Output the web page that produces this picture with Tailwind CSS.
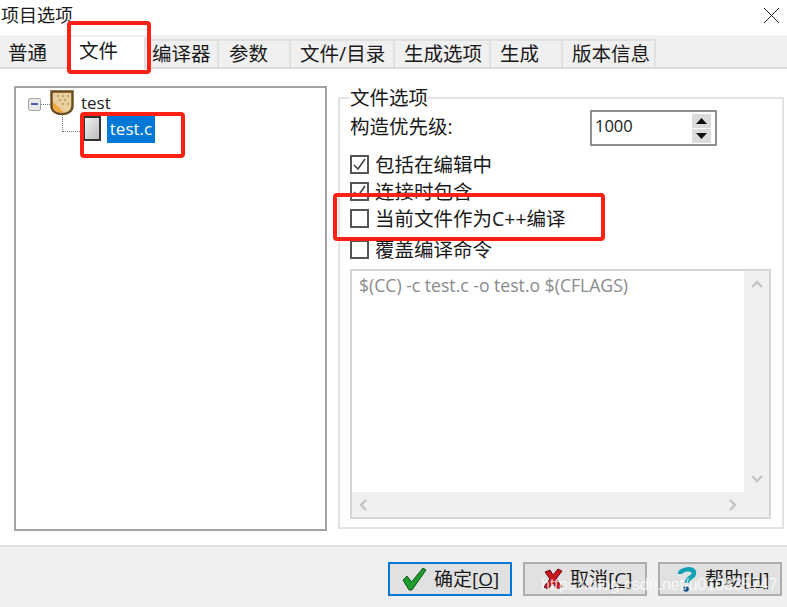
<!DOCTYPE html>
<html lang="zh-CN">
  <head>
    <meta charset="UTF-8" />
    <title>项目选项</title>
    <script src="https://cdn.jsdelivr.net/npm/@tailwindcss/browser@4"></script>
  </head>
  <body class="bg-white">
    <div class="relative flex flex-col w-[787px] h-[607px] overflow-hidden bg-white text-[19.5px] leading-none text-[#1a1a1a] font-['Open_Sans','Noto_Sans_CJK_SC',sans-serif]">
      <!-- title bar -->
      <div class="flex items-center justify-between h-[35px] pl-px pr-[8px] pb-[5px] text-[18px]">
        <span>项目选项</span>
        <svg class="w-[15px] h-[15px]" viewBox="0 0 15 15"><path d="M0 0L15 15M15 0L0 15" stroke="#222" fill="none" /></svg>
      </div>

      <!-- tabs -->
      <div class="flex items-end h-[34px] bg-[#f0f0f0] border-b-2 border-[#dcdcdc]">
        <div class="flex items-center w-[70px] h-[28px] pl-[8px] border-r-2 border-[#e0e0e0]">普通</div>
        <div class="flex items-center w-[76px] h-[32px] pl-[9px] pb-[4px] -mb-[2px] bg-white border-r-2 border-[#e0e0e0]">文件</div>
        <div class="flex items-center w-[73px] h-[28px] pl-[6px] border-t-2 border-r-2 border-[#e0e0e0]">编译器</div>
        <div class="flex items-center w-[72px] h-[28px] pl-[10px] border-t-2 border-r-2 border-[#e0e0e0]">参数</div>
        <div class="flex items-center w-[104px] h-[28px] pl-[9px] border-t-2 border-r-2 border-[#e0e0e0]">文件/目录</div>
        <div class="flex items-center w-[96px] h-[28px] pl-[9px] border-t-2 border-r-2 border-[#e0e0e0]">生成选项</div>
        <div class="flex items-center w-[72px] h-[28px] pl-[9px] border-t-2 border-r-2 border-[#e0e0e0]">生成</div>
        <div class="flex items-center w-[93px] h-[28px] pl-[9px] border-t-2 border-r-2 border-[#e0e0e0]">版本信息</div>
      </div>

      <!-- main area -->
      <div class="flex flex-1 pl-[14px] pt-[17px]">
        <!-- project tree -->
        <div class="w-[313px] h-[445px] pl-[12px] pt-[1px] border-2 border-[#a3a3a3]">
          <div class="flex items-center h-[27px]">
            <div class="flex items-center justify-center w-[13px] h-[13px] mt-[3px] bg-[#e8e8e8] border border-[#a8a8a8] rounded-[2px]">
              <div class="w-[7px] h-[2px] bg-[#4a5fb0]"></div>
            </div>
            <div class="w-[9px] mt-[3px] border-t border-dotted border-[#777]"></div>
            <svg class="w-[24px] h-[25px]" viewBox="0 0 24 25">
              <path d="M1.5 1.5H22.5V16C22.5 21 18 24 12 24C6 24 1.5 21 1.5 16Z" fill="#e9cf9e" stroke="#6b4a1c" stroke-width="2.4" />
              <path d="M3 12L14 22.5C8 23 3 20 3 15Z" fill="#f2a63a" />
              <path d="M7 6h2M12 6h2M17 6h2M9 10h2M14 10h2M12 14h2M17 14h2" stroke="#b89a68" stroke-width="1.5" />
            </svg>
            <span class="ml-[7px] text-[17px] text-[#222]">test</span>
          </div>
          <div class="flex items-start h-[27px] ml-[34px]">
            <div class="w-[20px] h-[18px] -mt-[2px] border-l border-b border-dotted border-[#777]"></div>
            <div class="w-[17px] h-[25px] ml-[2px] border-2 border-l border-[#333] bg-gradient-to-br from-[#f2f2f2] to-[#bcbcbc]"></div>
            <div class="flex items-center justify-center w-[48px] h-[27px] ml-[6px] pb-[2px] bg-[#0078d7] text-[17px] text-white">test.c</div>
          </div>
        </div>

        <!-- file options -->
        <div class="flex flex-col w-[446px] h-[432px] ml-[11px] mt-[11px] px-[10px] border-2 border-[#e3e3e3]">
          <div class="w-fit h-[21px] -mt-[11px] bg-white">文件选项</div>
          <div class="flex items-center justify-between w-[367px] h-[36px] mt-[1px]">
            <span class="pb-[2px]">构造优先级:</span>
            <div class="flex items-center justify-between w-[127px] h-[36px] pl-[3px] pr-[4px] border-2 border-[#8f8f8f] text-[16.5px]">
              <span class="pb-[3px]">1000</span>
              <div class="flex flex-col gap-px">
                <div class="flex items-center justify-center w-[19px] h-[14px] bg-[#dcdcdc]">
                  <svg class="w-[11px] h-[6px]" viewBox="0 0 11 6"><path d="M5.5 0L11 6H0Z" fill="#111" /></svg>
                </div>
                <div class="flex items-center justify-center w-[19px] h-[14px] bg-[#dcdcdc]">
                  <svg class="w-[11px] h-[6px]" viewBox="0 0 11 6"><path d="M0 0H11L5.5 6Z" fill="#111" /></svg>
                </div>
              </div>
            </div>
          </div>
          <div class="flex items-center gap-[6px] h-[19px] mt-[9px]">
            <div class="w-[19px] h-[19px] border-2 border-[#555] flex items-center justify-center">
              <svg class="w-[15px] h-[15px]" viewBox="0 0 15 15"><path d="M2 8L6 12L13 2" stroke="#444" stroke-width="1.6" fill="none" /></svg>
            </div>
            <span class="pt-px">包括在编辑中</span>
          </div>
          <div class="flex items-center gap-[6px] h-[19px] mt-[8px]">
            <div class="w-[19px] h-[19px] border-2 border-[#555] flex items-center justify-center">
              <svg class="w-[15px] h-[15px]" viewBox="0 0 15 15"><path d="M2 8L6 12L13 2" stroke="#444" stroke-width="1.6" fill="none" /></svg>
            </div>
            <span class="pt-px">连接时包含</span>
          </div>
          <div class="flex items-center gap-[6px] h-[19px] mt-[8px]">
            <div class="w-[19px] h-[19px] border-2 border-[#555]"></div>
            <span>当前文件作为C++编译</span>
          </div>
          <div class="flex items-center gap-[6px] h-[19px] mt-[12px]">
            <div class="w-[19px] h-[19px] border-2 border-[#555]"></div>
            <span class="pt-px">覆盖编译命令</span>
          </div>

          <!-- command box -->
          <div class="flex flex-col w-[421px] h-[250px] mt-[10px] border-2 border-[#d6d6d6]">
            <div class="flex flex-1">
              <div class="flex-1 pl-[7px] pt-[4px] text-[17.6px] leading-[20px] text-[#8a8a8a]">$(CC) -c test.c -o test.o $(CFLAGS)</div>
              <div class="flex flex-col items-center justify-between w-[25px] py-[9px] bg-[#f0f0f0]">
                <svg class="w-[12px] h-[8px]" viewBox="0 0 12 8"><path d="M1 7L6 2L11 7" stroke="#c4c4c4" stroke-width="2.4" fill="none" /></svg>
                <svg class="w-[12px] h-[8px]" viewBox="0 0 12 8"><path d="M1 1L6 6L11 1" stroke="#c4c4c4" stroke-width="2.4" fill="none" /></svg>
              </div>
            </div>
            <div class="flex items-center justify-between h-[25px] pl-[7px] pr-[32px] bg-[#f0f0f0]">
              <svg class="w-[8px] h-[12px]" viewBox="0 0 8 12"><path d="M7 1L2 6L7 11" stroke="#c4c4c4" stroke-width="2.4" fill="none" /></svg>
              <svg class="w-[8px] h-[12px]" viewBox="0 0 8 12"><path d="M1 1L6 6L1 11" stroke="#c4c4c4" stroke-width="2.4" fill="none" /></svg>
            </div>
          </div>
        </div>
      </div>

      <!-- button bar -->
      <div class="flex justify-end gap-[11px] h-[62px] pt-[15px] pr-[5px] bg-[#f0f0f0] border-t-2 border-[#e0e0e0] text-[19px]">
        <div class="flex items-center w-[124px] h-[34px] pl-[12px] gap-[7px] bg-[#e1e1e1] border-2 border-[#0078d7]">
          <svg class="w-[25px] h-[24px]" viewBox="0 0 25 24"><path d="M1 13L5 9L9.5 15L21 1L24 3L10 23H7Z" fill="#1f9a2e" stroke="#0f5a1c" /></svg>
          <span>确定[<span class="underline">O</span>]</span>
        </div>
        <div class="flex items-center w-[124px] h-[34px] pl-[18px] gap-[7px] bg-[#e1e1e1] border-2 border-[#adadad]">
          <svg class="w-[20px] h-[22px]" viewBox="0 0 20 22"><path d="M2 4L7 2L10 7L15 1L19 3L13 11L19 19L14 21L10 15L5 21L1 19L7 11Z" fill="#c8141c" stroke="#6e0a10" /></svg>
          <span>取消[<span class="underline">C</span>]</span>
        </div>
        <div class="flex items-center w-[124px] h-[34px] pl-[16px] gap-[7px] bg-[#e1e1e1] border-2 border-[#adadad]">
          <svg class="w-[22px] h-[26px]" viewBox="0 0 22 26"><path d="M4 8C4 3 18 1 18 7C18 12 11 11 11 17" stroke="#12a0b4" stroke-width="4.5" fill="none" /><circle cx="10" cy="23" r="2.8" fill="#0a4f8a" /></svg>
          <span>帮助[<span class="underline">H</span>]</span>
        </div>
      </div>

      <!-- annotations drawn over the dialog -->
      <div class="absolute left-[67px] top-[21px] w-[84px] h-[53px] border-[4px] border-[#ff2113] rounded-[4px]"></div>
      <div class="absolute left-[80px] top-[112px] w-[105px] h-[46px] border-[4px] border-[#ff2113] rounded-[4px]"></div>
      <div class="absolute left-[333px] top-[193px] w-[272px] h-[48px] border-[4px] border-[#ff2113] rounded-[4px]"></div>

      <!-- watermark -->
      <div class="absolute left-[541px] top-[577px] text-[16px] text-white/75 font-['Liberation_Sans',sans-serif]">https://blog.csdn.net/u010835747</div>
    </div>
  </body>
</html>
